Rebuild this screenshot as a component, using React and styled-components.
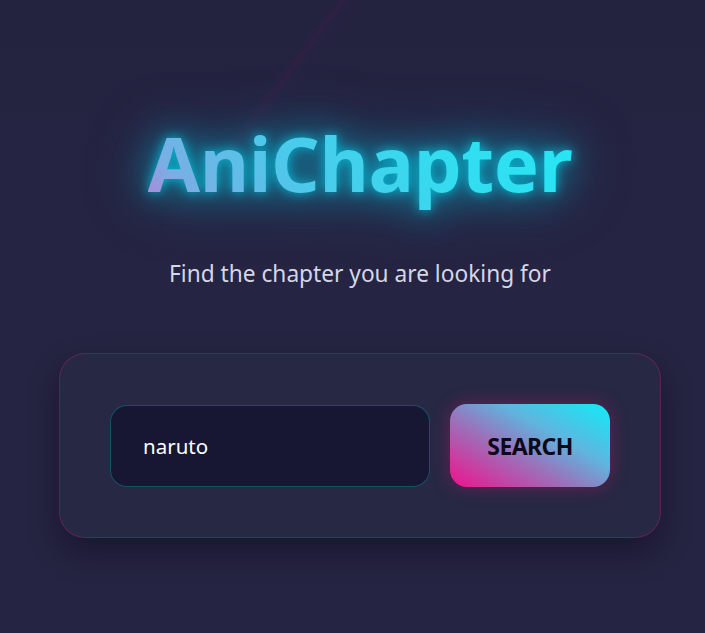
import React from "react";
import styled, { createGlobalStyle } from "styled-components";

const Global = createGlobalStyle`
  html, body { margin: 0; padding: 0; }
  body {
    background: #23223f;
    font-family: "Noto Sans", "Open Sans", sans-serif;
    min-height: 633px;
    overflow: hidden;
  }
`;

const Page = styled.div`
  min-height: 633px;
  box-sizing: border-box;
  padding: 107px 44px 0 59px;
  display: flex;
  flex-direction: column;
  align-items: center;
  background:
    linear-gradient(180deg, rgba(35, 34, 63, 0) 0%, rgba(36, 35, 64, 0) 10%, #252442 42%),
    linear-gradient(127deg, transparent 0 28.4%, rgba(62, 30, 72, 0.42) 29%, rgba(40, 35, 70, 0.3) 29.8%, transparent 31%),
    linear-gradient(180deg, #23223f 0%, #252442 40%, #292745 100%);
`;

const Title = styled.h1`
  margin: 0;
  font-size: 76px;
  font-weight: 700;
  line-height: 112px;
  letter-spacing: -0.4px;
  background: linear-gradient(50deg, #c07ad6 0%, #7aaee4 12%, #4ec8ea 35%, #34dcf0 65%, #24e8f5 100%);
  -webkit-background-clip: text;
  background-clip: text;
  color: transparent;
  filter: drop-shadow(0 0 6px rgba(0, 220, 245, 0.75)) drop-shadow(0 0 18px rgba(0, 200, 230, 0.6)) drop-shadow(0 0 30px rgba(0, 180, 220, 0.3));
`;

const Subtitle = styled.p`
  margin: 40px 0 0;
  font-size: 22.7px;
  color: #d6d6e6;
  line-height: 30px;
`;

const Card = styled.div`
  margin-top: 64px;
  width: 602px;
  height: 185px;
  box-sizing: border-box;
  border-radius: 26px;
  border: 1px solid rgba(180, 30, 115, 0.4);
  background: #272843;
  box-shadow: 0 14px 30px rgba(10, 8, 25, 0.45);
  display: flex;
  align-items: center;
  gap: 20px;
  padding: 0 50px;
`;

const Input = styled.input`
  width: 320px;
  height: 82px;
  box-sizing: border-box;
  border-radius: 17px;
  border: 1.5px solid rgba(20, 140, 160, 0.5);
  background: #181733;
  color: #ffffff;
  font-family: inherit;
  font-size: 20.5px;
  padding: 0 32px;
  outline: none;
`;

const Button = styled.button`
  width: 161px;
  height: 83px;
  border: none;
  border-radius: 17px;
  background: linear-gradient(30deg, #f0128c 0%, #9a72bb 40%, #5eb6df 65%, #10ecf8 100%);
  color: #0a0a18;
  font-family: inherit;
  font-size: 23px;
  font-weight: 700;
  letter-spacing: -0.6px;
  box-shadow: 0 0 18px rgba(230, 20, 130, 0.35);
  cursor: pointer;
`;

export default function App() {
  return (
    <>
      <Global />
      <Page>
        <Title>AniChapter</Title>
        <Subtitle>Find the chapter you are looking for</Subtitle>
        <Card>
          <Input defaultValue="naruto" />
          <Button>SEARCH</Button>
        </Card>
      </Page>
    </>
  );
}
